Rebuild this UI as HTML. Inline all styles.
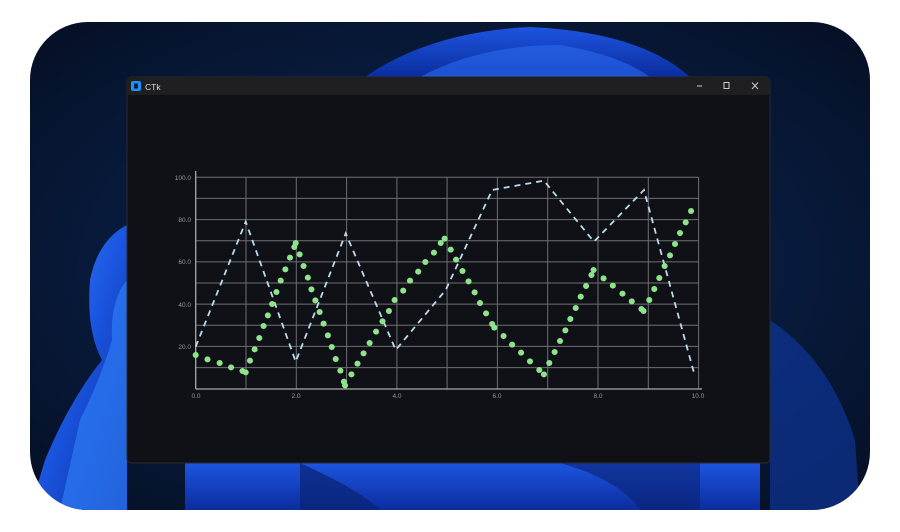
<!DOCTYPE html>
<html><head><meta charset="utf-8"><style>
html,body{margin:0;padding:0;background:#fff;width:900px;height:532px;overflow:hidden}
</style></head><body>
<svg width="900" height="532" viewBox="0 0 900 532" style="position:absolute;left:0;top:0" font-family="Liberation Sans, sans-serif">
<defs>
<clipPath id="rr"><rect x="30" y="22" width="840" height="488" rx="58"/></clipPath>
<radialGradient id="bg" cx="0.5" cy="0.5" r="0.7"><stop offset="0" stop-color="#0c2a5c"/><stop offset="1" stop-color="#050f24"/></radialGradient>
<linearGradient id="b1" x1="0" y1="0" x2="1" y2="1"><stop offset="0" stop-color="#3a8cff"/><stop offset="0.5" stop-color="#1b55e0"/><stop offset="1" stop-color="#0a2a9a"/></linearGradient>
<linearGradient id="b2" x1="0" y1="0" x2="0" y2="1"><stop offset="0" stop-color="#1d55e0"/><stop offset="1" stop-color="#0b2d9e"/></linearGradient>
</defs>
<g clip-path="url(#rr)">
<rect x="30" y="22" width="840" height="488" fill="url(#bg)"/>
<path d="M365 77 Q430 32 530 27 Q640 32 690 77 Z" fill="url(#b2)"/>
<path d="M420 77 Q480 45 560 45 Q620 55 650 77 Z" fill="#2a6af0" opacity="0.6"/>
<path d="M127 225 Q98 240 90 280 Q86 330 102 360 Q70 400 45 460 L30 510 L127 510 Z" fill="url(#b1)"/>
<path d="M127 280 Q110 300 112 340 Q100 380 80 420 L60 510 L127 510 Z" fill="#2e7cf6" opacity="0.7"/>
<path d="M185 463 L760 463 L760 510 L185 510 Z" fill="url(#b2)"/>
<path d="M300 463 Q360 490 380 510 L300 510 Z" fill="#0a2272" opacity="0.7"/>
<path d="M560 463 Q620 480 640 510 L700 510 L700 463 Z" fill="#0a2272" opacity="0.6"/>
<path d="M770 320 Q830 360 855 440 L860 510 L770 510 Z" fill="#0f3aa8" opacity="0.6"/>
</g>
<rect x="127" y="77" width="643" height="386" rx="4" fill="#101017" stroke="#2a2a2e" stroke-width="1"/>
<path d="M127 95 L127 81 Q127 77 131 77 L766 77 Q770 77 770 81 L770 95 Z" fill="#1f1f22"/>
<rect x="131" y="81" width="10" height="10" rx="2" fill="#1e90ff"/>
<rect x="134" y="83.5" width="4" height="5" fill="#0a1a30"/>
<text x="145" y="90" font-size="8.5" fill="#ddd">CTk</text>
<line x1="697" y1="86" x2="702" y2="86" stroke="#ccc" stroke-width="1"/>
<rect x="724" y="82.5" width="5" height="6" fill="none" stroke="#ccc" stroke-width="1"/>
<path d="M752 82.5 L758 89 M758 82.5 L752 89" stroke="#ccc" stroke-width="1"/>
<g stroke="#6e6e72" stroke-width="1">
<line x1="195.7" y1="177.3" x2="698.6" y2="177.3"/><line x1="195.7" y1="198.4" x2="698.6" y2="198.4"/><line x1="195.7" y1="219.6" x2="698.6" y2="219.6"/><line x1="195.7" y1="240.7" x2="698.6" y2="240.7"/><line x1="195.7" y1="261.9" x2="698.6" y2="261.9"/><line x1="195.7" y1="283" x2="698.6" y2="283"/><line x1="195.7" y1="304.1" x2="698.6" y2="304.1"/><line x1="195.7" y1="325.3" x2="698.6" y2="325.3"/><line x1="195.7" y1="346.4" x2="698.6" y2="346.4"/><line x1="195.7" y1="367.6" x2="698.6" y2="367.6"/>
<line x1="246" y1="177" x2="246" y2="389"/><line x1="296.3" y1="177" x2="296.3" y2="389"/><line x1="346.6" y1="177" x2="346.6" y2="389"/><line x1="396.9" y1="177" x2="396.9" y2="389"/><line x1="447.1" y1="177" x2="447.1" y2="389"/><line x1="497.4" y1="177" x2="497.4" y2="389"/><line x1="547.7" y1="177" x2="547.7" y2="389"/><line x1="598" y1="177" x2="598" y2="389"/><line x1="648.3" y1="177" x2="648.3" y2="389"/><line x1="698.6" y1="177" x2="698.6" y2="389"/>
</g>
<g stroke="#aaa" stroke-width="1.3"><line x1="195.7" y1="171" x2="195.7" y2="389"/><line x1="195.7" y1="389" x2="702" y2="389"/></g>
<g font-size="6.5" fill="#999" text-anchor="end">
<text x="191" y="180">100.0</text><text x="191" y="222">80.0</text><text x="191" y="264">60.0</text><text x="191" y="307">40.0</text><text x="191" y="349">20.0</text>
</g>
<g font-size="6.5" fill="#999" text-anchor="middle">
<text x="196" y="398">0.0</text><text x="296" y="398">2.0</text><text x="397" y="398">4.0</text><text x="497" y="398">6.0</text><text x="598" y="398">8.0</text><text x="698" y="398">10.0</text>
</g>
<svg x="160" y="160" width="560" height="250" viewBox="0 0 1568 750" preserveAspectRatio="none" overflow="visible">
<polyline points="100,560 240,185 380,605 520,220 660,570 800,390 930,90 1075,62 1215,245 1355,90 1495,638" fill="none" stroke="#b8dcec" stroke-width="1.8" stroke-dasharray="6 5" vector-effect="non-scaling-stroke"/>
<g fill="#8de48a">
<ellipse cx="100" cy="585" rx="8.5" ry="9"/><ellipse cx="133" cy="598" rx="8.5" ry="9"/><ellipse cx="167" cy="609" rx="8.5" ry="9"/><ellipse cx="199" cy="622" rx="8.5" ry="9"/><ellipse cx="231" cy="633" rx="8.5" ry="9"/><ellipse cx="240" cy="637" rx="8.5" ry="9"/><ellipse cx="252" cy="602" rx="8.5" ry="9"/><ellipse cx="265" cy="568" rx="8.5" ry="9"/><ellipse cx="278" cy="534" rx="8.5" ry="9"/><ellipse cx="290" cy="498" rx="8.5" ry="9"/><ellipse cx="302" cy="466" rx="8.5" ry="9"/><ellipse cx="314" cy="432" rx="8.5" ry="9"/><ellipse cx="326" cy="396" rx="8.5" ry="9"/><ellipse cx="338" cy="362" rx="8.5" ry="9"/><ellipse cx="351" cy="328" rx="8.5" ry="9"/><ellipse cx="364" cy="293" rx="8.5" ry="9"/><ellipse cx="376" cy="261" rx="8.5" ry="9"/><ellipse cx="380" cy="249" rx="8.5" ry="9"/><ellipse cx="391" cy="283" rx="8.5" ry="9"/><ellipse cx="402" cy="318" rx="8.5" ry="9"/><ellipse cx="414" cy="353" rx="8.5" ry="9"/><ellipse cx="424" cy="388" rx="8.5" ry="9"/><ellipse cx="435" cy="421" rx="8.5" ry="9"/><ellipse cx="447" cy="456" rx="8.5" ry="9"/><ellipse cx="458" cy="491" rx="8.5" ry="9"/><ellipse cx="470" cy="526" rx="8.5" ry="9"/><ellipse cx="481" cy="561" rx="8.5" ry="9"/><ellipse cx="492" cy="597" rx="8.5" ry="9"/><ellipse cx="505" cy="632" rx="8.5" ry="9"/><ellipse cx="515" cy="665" rx="8.5" ry="9"/><ellipse cx="518" cy="676" rx="8.5" ry="9"/><ellipse cx="536" cy="643" rx="8.5" ry="9"/><ellipse cx="553" cy="611" rx="8.5" ry="9"/><ellipse cx="570" cy="580" rx="8.5" ry="9"/><ellipse cx="587" cy="549" rx="8.5" ry="9"/><ellipse cx="605" cy="515" rx="8.5" ry="9"/><ellipse cx="623" cy="484" rx="8.5" ry="9"/><ellipse cx="641" cy="453" rx="8.5" ry="9"/><ellipse cx="657" cy="420" rx="8.5" ry="9"/><ellipse cx="681" cy="392" rx="8.5" ry="9"/><ellipse cx="700" cy="362" rx="8.5" ry="9"/><ellipse cx="723" cy="335" rx="8.5" ry="9"/><ellipse cx="743" cy="306" rx="8.5" ry="9"/><ellipse cx="767" cy="278" rx="8.5" ry="9"/><ellipse cx="786" cy="249" rx="8.5" ry="9"/><ellipse cx="797" cy="236" rx="8.5" ry="9"/><ellipse cx="814" cy="269" rx="8.5" ry="9"/><ellipse cx="829" cy="299" rx="8.5" ry="9"/><ellipse cx="847" cy="333" rx="8.5" ry="9"/><ellipse cx="864" cy="364" rx="8.5" ry="9"/><ellipse cx="881" cy="397" rx="8.5" ry="9"/><ellipse cx="896" cy="429" rx="8.5" ry="9"/><ellipse cx="913" cy="460" rx="8.5" ry="9"/><ellipse cx="930" cy="492" rx="8.5" ry="9"/><ellipse cx="936" cy="503" rx="8.5" ry="9"/><ellipse cx="962" cy="528" rx="8.5" ry="9"/><ellipse cx="986" cy="554" rx="8.5" ry="9"/><ellipse cx="1011" cy="578" rx="8.5" ry="9"/><ellipse cx="1036" cy="604" rx="8.5" ry="9"/><ellipse cx="1062" cy="630" rx="8.5" ry="9"/><ellipse cx="1075" cy="643" rx="8.5" ry="9"/><ellipse cx="1090" cy="609" rx="8.5" ry="9"/><ellipse cx="1105" cy="576" rx="8.5" ry="9"/><ellipse cx="1120" cy="543" rx="8.5" ry="9"/><ellipse cx="1135" cy="511" rx="8.5" ry="9"/><ellipse cx="1149" cy="477" rx="8.5" ry="9"/><ellipse cx="1164" cy="444" rx="8.5" ry="9"/><ellipse cx="1178" cy="410" rx="8.5" ry="9"/><ellipse cx="1193" cy="378" rx="8.5" ry="9"/><ellipse cx="1208" cy="345" rx="8.5" ry="9"/><ellipse cx="1214" cy="330" rx="8.5" ry="9"/><ellipse cx="1242" cy="355" rx="8.5" ry="9"/><ellipse cx="1268" cy="377" rx="8.5" ry="9"/><ellipse cx="1295" cy="401" rx="8.5" ry="9"/><ellipse cx="1321" cy="424" rx="8.5" ry="9"/><ellipse cx="1348" cy="447" rx="8.5" ry="9"/><ellipse cx="1354" cy="453" rx="8.5" ry="9"/><ellipse cx="1370" cy="420" rx="8.5" ry="9"/><ellipse cx="1384" cy="387" rx="8.5" ry="9"/><ellipse cx="1398" cy="354" rx="8.5" ry="9"/><ellipse cx="1413" cy="318" rx="8.5" ry="9"/><ellipse cx="1428" cy="286" rx="8.5" ry="9"/><ellipse cx="1442" cy="252" rx="8.5" ry="9"/><ellipse cx="1456" cy="219" rx="8.5" ry="9"/><ellipse cx="1472" cy="187" rx="8.5" ry="9"/><ellipse cx="1487" cy="153" rx="8.5" ry="9"/>
</g>
</svg>
</svg>
</body></html>
